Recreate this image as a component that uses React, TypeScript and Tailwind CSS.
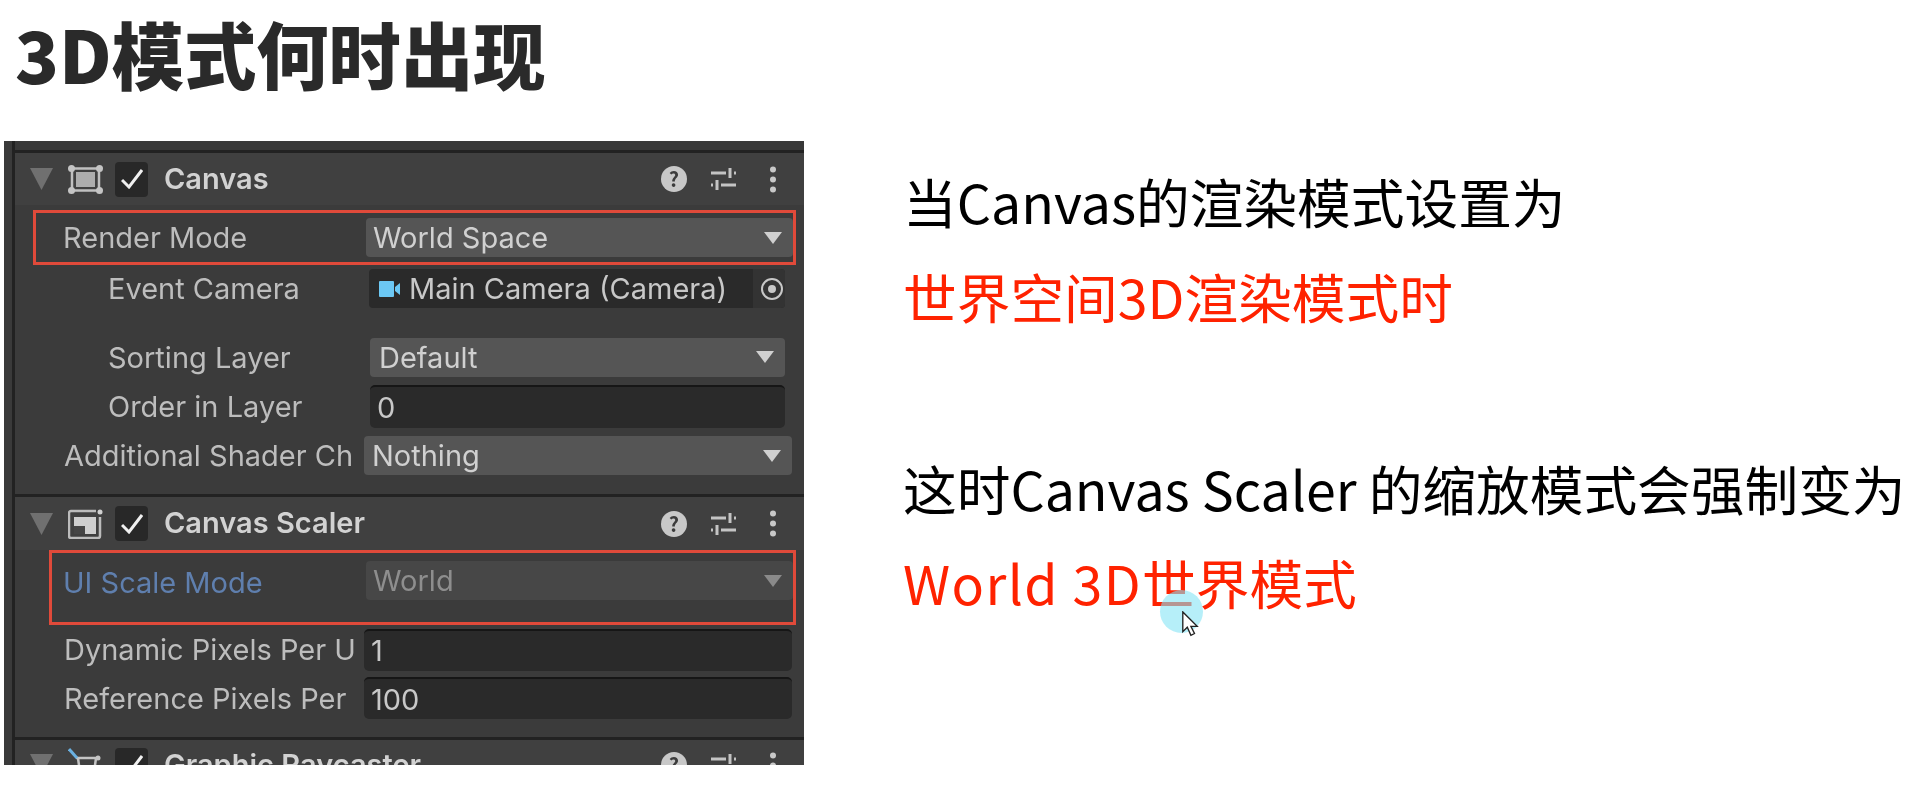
import React from 'react';

const CJK = "font-['Noto_Sans_CJK_SC','Noto_Sans',sans-serif]";

function Arrow({ className }: { className: string }) {
  return (
    <svg width="20" height="14" viewBox="0 0 20 14" className={className}>
      <path d="M1 1h18L10 13z" />
    </svg>
  );
}

function CanvasIcon() {
  return (
    <svg width="35" height="29" viewBox="0 0 35 29" fill="none">
      <rect x="4" y="3.5" width="27" height="22" stroke="#c0c0c0" strokeWidth="2.5" />
      <rect x="8" y="7" width="19" height="15" fill="#adadad" />
      <circle cx="3.5" cy="3.5" r="3.5" fill="#c4c4c4" />
      <circle cx="31.5" cy="3.5" r="3.5" fill="#c4c4c4" />
      <circle cx="3.5" cy="25.5" r="3.5" fill="#c4c4c4" />
      <circle cx="31.5" cy="25.5" r="3.5" fill="#c4c4c4" />
    </svg>
  );
}

function ScalerIcon() {
  return (
    <svg width="35" height="30" viewBox="0 0 35 30" fill="none">
      <path d="M28 2H3a2 2 0 0 0-2 2v23a2 2 0 0 0 2 2h27a2 2 0 0 0 2-2V8" stroke="#bcbcbc" strokeWidth="2.5" />
      <circle cx="32" cy="3" r="2.5" fill="#d0d0d0" />
      <path d="M6 8h22v17H6z" fill="#cfcfcf" />
      <path d="M6 17h11v8H6z" fill="#454545" />
    </svg>
  );
}

function RaycasterIcon() {
  return (
    <svg width="35" height="34" viewBox="0 0 35 34" fill="none" stroke="#c4c4c4" strokeWidth="2.5">
      <path d="M8 10h22M10 10l3 22M28 10l-3 22" />
      <circle cx="30" cy="10" r="2.5" fill="#c4c4c4" stroke="none" />
      <path d="M1 1l8 9" stroke="#6ab0e0" strokeWidth="3" />
    </svg>
  );
}

function HeaderIcons() {
  return (
    <div className="ml-auto flex items-center">
      <div className={`flex h-[26px] w-[26px] items-center justify-center rounded-full bg-[#c8c8c8] text-[20px] font-bold leading-none text-[#3c3c3c] ${CJK}`}>?</div>
      <svg width="25" height="24" viewBox="0 0 25 24" className="ml-[24px]" stroke="#c4c4c4" strokeWidth="3" fill="none">
        <path d="M0 6h15M23 6h2M0 18h2M10 18h15M19 1v10M6 13v10" />
      </svg>
      <svg width="6" height="27" viewBox="0 0 6 27" className="ml-[34px] mr-[28px]" fill="#c8c8c8">
        <circle cx="3" cy="3.5" r="3" />
        <circle cx="3" cy="13.5" r="3" />
        <circle cx="3" cy="23.5" r="3" />
      </svg>
    </div>
  );
}

function Header({ icon, title, h }: { icon: React.ReactNode; title: string; h: string }) {
  return (
    <div className={`flex shrink-0 items-center bg-[#404040] pl-[15px] ${h}`}>
      <svg width="23" height="22" viewBox="0 0 23 22" className="fill-[#707070]">
        <path d="M0 0h23L11.5 22z" />
      </svg>
      <div className="ml-[15px] flex w-[35px] justify-center">{icon}</div>
      <div className="ml-[12px] flex h-[35px] w-[33px] items-center justify-center rounded-[4px] bg-[#282828]">
        <svg width="22" height="20" viewBox="0 0 22 20" fill="none" stroke="#f0f0f0" strokeWidth="3">
          <path d="M1 11l7 7L21 1" />
        </svg>
      </div>
      <div className="ml-[16px] -translate-y-px whitespace-nowrap text-[29px] font-semibold leading-none text-[#d2d2d2]">{title}</div>
      <HeaderIcons />
    </div>
  );
}

function Label({ children, indent, w }: { children: React.ReactNode; indent?: boolean; w: string }) {
  return (
    <div className={`shrink-0 whitespace-nowrap text-[29px] leading-none text-[#bdbdbd] ${w} ${indent ? 'pl-[93px]' : 'pl-[49px]'}`}>
      {children}
    </div>
  );
}

function Dropdown({ value, w, muted, pl }: { value: string; w: string; muted?: boolean; pl: string }) {
  return (
    <div className={`flex h-[39px] items-center justify-between rounded-[4px] pr-[10px] text-[29px] leading-none ${w} ${pl} ${muted ? 'bg-[#474747] text-[#8e8e8e]' : 'bg-[#555555] text-[#d0d0d0]'}`}>
      <span>{value}</span>
      <Arrow className={muted ? 'fill-[#8a8a8a]' : 'fill-[#d0d0d0]'} />
    </div>
  );
}

function NumberField({ value, w, h }: { value: string; w: string; h: string }) {
  return (
    <div className={`flex items-center rounded-[5px] border-t-2 border-[#161616] bg-[#2a2a2a] pl-[7px] text-[29px] leading-none text-[#c8c8c8] ${w} ${h}`}>
      {value}
    </div>
  );
}

export default function App() {
  return (
    <div className={`relative h-[801px] w-[1917px] overflow-hidden bg-white ${CJK}`}>
      <h1 className="flex h-[141px] items-start pl-[15px] pt-[11px] text-[72.3px] font-black leading-[84px] text-[#2a2a2a]">3D模式何时出现</h1>

      <div className="flex">
        <div className="ml-[4px] h-[624px] w-[800px] shrink-0 overflow-hidden bg-[#3a3a3a] pl-[8px] font-['Inter',sans-serif] blur-[0.7px]">
          <div className="flex h-full flex-col border-l-[3px] border-[#222222] bg-[#3b3b3b]">
            <div className="h-[12px] shrink-0 border-b-[3px] border-[#222222] bg-[#383838]" />
            <Header icon={<CanvasIcon />} title="Canvas" h="h-[52px]" />

            <div className="ml-[18px] mt-[5px] flex h-[55px] w-[763px] shrink-0 items-center border-[3px] border-[#e04a3a]">
              <div className="w-[27px] shrink-0" />
              <div className="w-[303px] shrink-0 whitespace-nowrap text-[29px] leading-none text-[#bdbdbd]">Render Mode</div>
              <Dropdown value="World Space" w="w-[427px]" pl="pl-[7px]" />
            </div>

            <div className="flex h-[47px] shrink-0 items-center">
              <Label indent w="w-[354px]">Event Camera</Label>
              <div className="flex h-[39px] w-[416px] items-center rounded-[4px] bg-[#2a2a2a] pl-[10px] text-[29px] leading-none text-[#c8c8c8]">
                <svg width="22" height="18" viewBox="0 0 22 18" className="mr-[8px] shrink-0">
                  <rect x="0" y="1" width="15" height="16" rx="1" fill="#6cc8f4" />
                  <path d="M16 7l5-4v12l-5-4z" fill="#6cc8f4" />
                </svg>
                <span className="whitespace-nowrap">Main Camera (Camera)</span>
                <div className="ml-auto flex h-[39px] w-[32px] items-center justify-end rounded-r-[4px] bg-[#333333] pr-[1px]">
                  <svg width="24" height="24" viewBox="0 0 24 24" fill="none" stroke="#c8c8c8" strokeWidth="2">
                    <circle cx="12" cy="12" r="10" />
                    <circle cx="12" cy="12" r="3" fill="#c8c8c8" />
                  </svg>
                </div>
              </div>
            </div>

            <div className="h-[21px] shrink-0" />

            <div className="flex h-[48px] shrink-0 items-center">
              <Label indent w="w-[355px]">Sorting Layer</Label>
              <Dropdown value="Default" w="w-[415px]" pl="pl-[9px]" />
            </div>

            <div className="flex h-[51px] shrink-0 items-center">
              <Label indent w="w-[355px]">Order in Layer</Label>
              <NumberField value="0" w="w-[415px]" h="h-[43px]" />
            </div>

            <div className="flex h-[47px] shrink-0 items-center">
              <Label w="w-[349px]">Additional Shader Ch</Label>
              <Dropdown value="Nothing" w="w-[428px]" pl="pl-[8px]" />
            </div>

            <div className="h-[15px] shrink-0" />
            <div className="h-[3px] shrink-0 bg-[#222222]" />

            <Header icon={<ScalerIcon />} title="Canvas Scaler" h="h-[53px]" />

            <div className="ml-[34px] flex h-[75px] w-[747px] shrink-0 items-start border-[3px] border-[#e04a3a] pt-[8px]">
              <div className="w-[11px] shrink-0" />
              <div className="mt-[7px] w-[303px] shrink-0 whitespace-nowrap text-[29px] leading-none text-[#5f7fae]">UI Scale Mode</div>
              <Dropdown value="World" w="w-[427px]" pl="pl-[7px]" muted />
            </div>

            <div className="flex h-[49px] shrink-0 items-center">
              <Label w="w-[349px]">Dynamic Pixels Per U</Label>
              <NumberField value="1" w="w-[428px]" h="h-[42px]" />
            </div>

            <div className="flex h-[48px] shrink-0 items-center">
              <Label w="w-[349px]">Reference Pixels Per</Label>
              <NumberField value="100" w="w-[428px]" h="h-[42px]" />
            </div>

            <div className="h-[15px] shrink-0" />
            <div className="h-[3px] shrink-0 bg-[#222222]" />

            <Header icon={<RaycasterIcon />} title="Graphic Raycaster" h="h-[50px]" />
          </div>
        </div>

        <div className="ml-[99px] flex flex-col text-[53.7px] font-normal leading-none text-black">
          <div className="mt-[33px] whitespace-nowrap">当Canvas的渲染模式设置为</div>
          <div className="mt-[41px] whitespace-nowrap text-[#ff2200]">世界空间3D渲染模式时</div>
          <div className="mt-[139px] whitespace-nowrap">这时Canvas Scaler 的缩放模式会强制变为</div>
          <div className="mt-[40px] whitespace-nowrap text-[#ff2200]">
            <span className="tracking-[1.4px]">World 3D</span>世界模式
          </div>
        </div>
      </div>

      {/* presenter's cursor with highlight */}
      <div className="absolute left-[1160px] top-[590px] h-[43px] w-[43px] rounded-full bg-[#85e5f5]/60" />
      <svg width="18" height="27" viewBox="0 0 20 30" className="absolute left-[1181px] top-[611px]">
        <path d="M2 1v22l5-5 4 9 4-2-4-8h7z" fill="#ffffff" stroke="#222222" strokeWidth="1.5" />
      </svg>
    </div>
  );
}
